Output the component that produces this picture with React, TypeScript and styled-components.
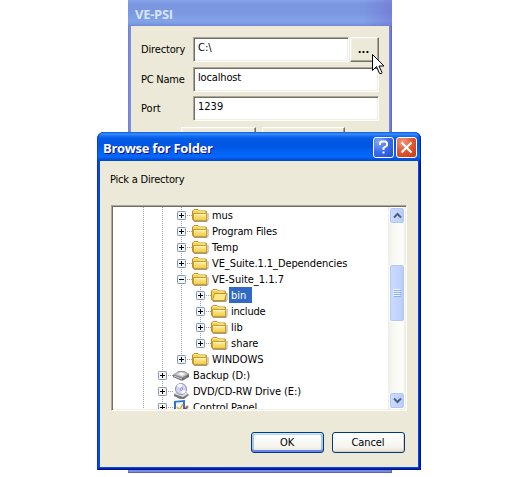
import React from "react";
import styled, { createGlobalStyle, css } from "styled-components";

const Global = createGlobalStyle`
  html, body { margin: 0; background: #fff; }
  body { font: 11px/16px "DejaVu Sans Condensed", "DejaVu Sans", sans-serif; color: #000; overflow: hidden; }
  * { box-sizing: border-box; }
`;

const Desktop = styled.main`
  position: relative;
  width: 531px;
  height: 477px;
  overflow: hidden;
  background: #fff;
`;

const Text = styled.span<{ $ls?: number }>`
  white-space: pre;
  letter-spacing: ${(p) => p.$ls ?? 0}px;
`;

const BackWindow = styled.section`
  position: absolute;
  left: 128px;
  top: 0;
  width: 264px;
  height: 473px;
  padding: 0 3px 4px;
  background: linear-gradient(90deg, #6673d0 0, #7b8ce3 1px, #7888df 262px, #5c5fb8 264px);
  border-bottom: 1px solid #5b62bd;
`;

const BackTitle = styled.header`
  height: 26px;
  margin: 0 -3px;
  padding: 5px 0 0 7px;
  font: bold 13px/18px "Open Sans", "DejaVu Sans Condensed", sans-serif;
  color: #d8e4f8;
  background: linear-gradient(90deg, transparent 235px, rgba(112, 100, 205, 0.45)),
    linear-gradient(#86a6e8 0, #7a96df 4px, #7b97e0 13px, #82a4e8 21px, #7b99e2 24px, #7387d8 26px);
`;

const BackBody = styled.div`
  height: 443px;
  padding: 11px 10px 0;
  background: #ece9d8;
`;

const Field = styled.div<{ $gap: number }>`
  display: grid;
  grid-template-columns: 52px 1fr auto;
  height: 23px;
  margin-bottom: ${(p) => p.$gap}px;
  line-height: 25px;
`;

const sunken = css`
  background: #fff;
  border: 1px solid;
  border-color: #aca899 #fff #fff #aca899;
  box-shadow: inset 1px 1px #716f64, inset -1px -1px #f1efe2;
`;

const raised = css`
  background: #ece9d8;
  border: 1px solid;
  border-color: #fff #716f64 #716f64 #fff;
  box-shadow: inset -1px -1px #aca899, inset 1px 1px #f1efe2;
`;

const Input = styled.div`
  ${sunken}
  padding-left: 4px;
  line-height: 19px;
`;

const Browse = styled.button`
  ${raised}
  width: 29px;
  margin-left: 1px;
  padding: 0 2px 0 0;
  font: inherit;
  font-weight: bold;
  line-height: 18px;
`;

const HiddenActions = styled.div`
  display: flex;
  gap: 6px;
  margin: 8px 0 0 40px;
`;

const ClassicButton = styled.div<{ $w: number }>`
  ${raised}
  width: ${(p) => p.$w}px;
  height: 23px;
`;

const Dialog = styled.section`
  position: absolute;
  left: 97px;
  top: 132px;
  width: 324px;
  height: 338px;
  padding: 0 3px 3px;
  border-radius: 7px 7px 0 0;
  background: #0848dc;
  box-shadow: inset 1px 0 #0831c8, inset -1px -1px #00138c, inset -2px -2px #0325b0;
  overflow: hidden;
`;

const DialogTitle = styled.header`
  display: flex;
  height: 29px;
  margin: 0 -3px;
  padding: 5px 4px 0 6px;
  border-radius: 7px 7px 0 0;
  background: linear-gradient(#0a5ad8 0, #3b8ffc 2px, #1370f3 4px, #0358e4 7px, #0055e3 14px, #0361f4 20px, #0668fd 25px, #0252dd 27px, #0045c8 29px);
  box-shadow: inset 1px 0 #0844cb, inset -1px 0 #0326a8;
  color: #fff;
  font: bold 13px/23px "Open Sans", "DejaVu Sans Condensed", sans-serif;
  text-shadow: 1px 1px #0f1089;
`;

const TitleText = styled(Text)`
  flex: 1;
`;

const CaptionButton = styled.button<{ $close?: boolean }>`
  width: 21px;
  height: 21px;
  margin-left: 2px;
  padding: 0;
  border: 1px solid #fff;
  border-radius: 3px;
  background: ${(p) =>
    p.$close
      ? "radial-gradient(circle at 30% 20%, #ee9a80 0, #e2562f 50%, #c63c10 100%)"
      : "radial-gradient(circle at 25% 20%, #86a9f5 0, #3c6cea 50%, #1a4bd6 100%)"};
  svg { display: block; }
`;

const DialogBody = styled.div`
  height: 306px;
  padding: 11px 11px 0;
  background: #ece9d8;
`;

const Prompt = styled.div`
  height: 33px;
  margin-left: -1px;
`;

const TreeBox = styled.div`
  ${sunken}
  display: flex;
  width: 296px;
  height: 206px;
  padding: 1px;
`;

const Tree = styled.ul`
  flex: 1;
  margin: 0;
  padding: 0;
  list-style: none;
  overflow: hidden;
`;

const Item = styled.li`
  display: flex;
  height: 16px;
  svg { flex: none; display: block; }
`;

const ItemName = styled(Text)<{ $selected?: boolean }>`
  height: 16px;
  padding: 0 6px 0 2px;
  margin-left: 1px;
  line-height: 17px;
  ${(p) => p.$selected && css`background: #316ac5; color: #fff;`}
`;

const ScrollTrack = styled.div`
  display: flex;
  flex-direction: column;
  width: 17px;
  background: linear-gradient(90deg, #eeede5 0, #f8f8f3 5px, #fefefb 15px, #eeede5 17px);
`;

const ScrollPart = styled.div<{ $h: number }>`
  display: flex;
  align-items: center;
  justify-content: center;
  height: ${(p) => p.$h}px;
  margin: 0 0 0 1px;
  border: 1px solid #fff;
  border-radius: 3px;
  background: linear-gradient(90deg, #cbdafe, #c1d3fd 70%, #b4c8f6);
  box-shadow: inset 0 0 0 1px #b5c8f3, inset 0 -1px #9db4e0;
`;

const Gap = styled.div<{ $h: number }>`
  height: ${(p) => p.$h}px;
`;

const Actions = styled.footer`
  display: flex;
  justify-content: flex-end;
  gap: 8px;
  padding: 21px 2px 0 0;
`;

const XpButton = styled.button<{ $default?: boolean }>`
  width: 73px;
  height: 21px;
  padding: 0 1px 0 0;
  border: 1px solid #003c74;
  border-radius: 3px;
  color: #000;
  font: inherit;
  line-height: 20px;
  letter-spacing: -0.1px;
  background: linear-gradient(#fff, #f5f4ee 75%, #e4e0d3);
  box-shadow: ${(p) =>
    p.$default
      ? "inset 0 1px #cee7ff, inset 0 -2px #6982ee, inset 2px 0 #a9c5f1, inset -2px 0 #a9c5f1, inset 0 2px #bcd4f6"
      : "inset -1px -1px #d6d0c5"};
`;

const Cursor = styled.svg`
  position: absolute;
  left: 372px;
  top: 54px;
`;

type Kind = "folder" | "open" | "drive" | "disc" | "panel";
type Node = { name: string; level: number; kind: Kind; expanded?: boolean; last?: boolean; ls?: number };

const nodes: Node[] = [
  { name: "mus", level: 1, kind: "folder", ls: -0.1 },
  { name: "Program Files", level: 1, kind: "folder", ls: -0.12 },
  { name: "Temp", level: 1, kind: "folder" },
  { name: "VE_Suite.1.1_Dependencies", level: 1, kind: "folder", ls: -0.09 },
  { name: "VE-Suite_1.1.7", level: 1, kind: "folder", expanded: true },
  { name: "bin", level: 2, kind: "open" },
  { name: "include", level: 2, kind: "folder", ls: -0.2 },
  { name: "lib", level: 2, kind: "folder" },
  { name: "share", level: 2, kind: "folder", last: true },
  { name: "WINDOWS", level: 1, kind: "folder", last: true },
  { name: "Backup (D:)", level: 0, kind: "drive", ls: -0.1 },
  { name: "DVD/CD-RW Drive (E:)", level: 0, kind: "disc", ls: -0.07 },
  { name: "Control Panel", level: 0, kind: "panel", ls: -0.1 },
];

const GUIDE = "#a5a294";

function Icon({ kind }: { kind: Kind }) {
  if (kind === "drive")
    return (
      <g>
        <path d="M0 8l6-4h5l5 3v3l-6 3.500H8L0 10z" fill="#707074" />
        <path d="M.5 7.500L6 4.500h5l4.500 2.500L9.500 10.500z" fill="#c9c9cc" stroke="#98989b" strokeWidth=".6" />
        <path d="M5 7l3-1.500L12 7l-3 1.800z" fill="#f8f8f8" />
        <path d="M1 9l8 3" stroke="#d8d8da" />
        <path d="M11 11l2-1" stroke="#69a657" />
      </g>
    );
  if (kind === "disc")
    return (
      <g>
        <path d="M1 11l4-2h8l3 3-5 4H7l-6-3z" fill="#77777c" />
        <path d="M1 11l4-2h8l2 2-5 3z" fill="#dedee2" />
        <circle cx="8" cy="6" r="5.500" fill="#d4d5f4" stroke="#8d8eb9" />
        <path d="M8 6L4 2.500A5 5 0 019 1zM8 6l5 2a5 5 0 01-4 3z" fill="#fff" />
        <circle cx="8.500" cy="6" r="1.700" fill="#8d8dcb" />
        <circle cx="8.500" cy="6" r=".7" fill="#fff" />
      </g>
    );
  if (kind === "panel")
    return (
      <g>
        <path d="M1 2l11-1v14L1 14z" fill="#2f74c8" />
        <path d="M3 3.500l7-.5v9l-7 .5z" fill="#f0f6fd" />
        <path d="M4 8l2.500 3L10 5" fill="none" stroke="#e7ad28" strokeWidth="1.500" />
        <path d="M8 11l7-4-2 5-3 2z" fill="#2a5caa" />
        <circle cx="14" cy="8" r="1.500" fill="#d86b3c" />
      </g>
    );
  return (
    <g>
      <path d="M2 14.500h13l1-1.500V6" fill="none" stroke="#77684a" strokeOpacity=".65" />
      <path d="M.5 12.500V4L2 2.500h4L7.500 4H14l.5 1v8.500h-13z" fill="#f3cf55" stroke="#c09226" />
      {kind === "open" ? (
        <path d="M1.500 13.500l2-7h12l-2 7z" fill="#fde984" stroke="#c39325" />
      ) : (
        <>
          <path d="M1.500 6.500h13v7h-13z" fill="url(#folder)" stroke="#c79b2c" />
          <path d="M2 7.500h12" stroke="#fff8c9" />
        </>
      )}
      <path d="M2 3.500h4L7.500 5H13" fill="none" stroke="#fff3ae" />
    </g>
  );
}

function Row({ node, index }: { node: Node; index: number }) {
  const x = 45 + node.level * 19;
  const guides = Array.from({ length: node.level + 2 }, (_, i) => 30 + i * 19);
  return (
    <Item>
      <svg width={x + 32} height="16">
        {index === 0 && (
          <defs>
            <linearGradient id="folder" x1="0" y1="0" x2="0" y2="1">
              <stop offset="0" stopColor="#ffef9c" />
              <stop offset="1" stopColor="#f3c944" />
            </linearGradient>
          </defs>
        )}
        {guides.map((g, i) => (
          <path
            key={g}
            d={`M${g + 0.5} 0V${node.last && i === node.level + 1 ? 8 : 16}`}
            stroke={GUIDE}
            strokeDasharray="1 1"
          />
        ))}
        <path d={`M${x + 10} 8.500H${x + 16}`} stroke={GUIDE} strokeDasharray="1 1" />
        <rect x={x + 0.5} y="4.500" width="8" height="8" rx=".8" fill="#f5f4ef" stroke="#7898b5" />
        <path d={`M${x + 2} 8.500h5${node.expanded ? "" : `M${x + 4.5} 6v5`}`} stroke="#000" />
        <g transform={`translate(${x + 15} 0)`}>
          <Icon kind={node.kind} />
        </g>
      </svg>
      <ItemName $ls={node.ls} $selected={node.name === "bin"}>{node.name}</ItemName>
    </Item>
  );
}

export default function App() {
  return (
    <Desktop>
      <Global />
      <BackWindow>
        <BackTitle><Text $ls={-0.3}>VE-PSI</Text></BackTitle>
        <BackBody>
          <Field $gap={7}>
            <Text $ls={-0.15}>Directory</Text>
            <Input>C:\</Input>
            <Browse>...</Browse>
          </Field>
          <Field $gap={6}>
            <Text $ls={-0.25}>PC Name</Text>
            <Input><Text $ls={-0.15}>localhost</Text></Input>
          </Field>
          <Field $gap={0}>
            <Text>Port</Text>
            <Input><Text>1239</Text></Input>
          </Field>
          <HiddenActions>
            <ClassicButton $w={75} />
            <ClassicButton $w={83} />
          </HiddenActions>
        </BackBody>
      </BackWindow>
      <Cursor width="13" height="21" viewBox="0 0 13 21">
        <path d="M.5.5v16l4-4 3 7h2l.5-1-3-6.500h5z" fill="#fff" stroke="#000" />
      </Cursor>
      <Dialog>
        <DialogTitle>
          <TitleText $ls={-0.3}>Browse for Folder</TitleText>
          <CaptionButton aria-label="Help">
            <svg width="19" height="19"><path d="M6 7V5l1.500-1.500h4L13 5v2.500L9.500 10v2M9.500 13.500v2" fill="none" stroke="#fff" strokeWidth="2" /></svg>
          </CaptionButton>
          <CaptionButton $close aria-label="Close">
            <svg width="19" height="19"><path d="M4.500 4.500l10 10M14.500 4.500l-10 10" stroke="#fff" strokeWidth="2.200" /></svg>
          </CaptionButton>
        </DialogTitle>
        <DialogBody>
          <Prompt><Text $ls={-0.2}>Pick a Directory</Text></Prompt>
          <TreeBox>
            <Tree>{nodes.map((n, i) => <Row key={n.name} node={n} index={i} />)}</Tree>
            <ScrollTrack>
              <ScrollPart $h={17}><svg width="9" height="7"><path d="M1 5.500l3.500-3.500L8 5.500" fill="none" stroke="#4d6185" strokeWidth="2" /></svg></ScrollPart>
              <Gap $h={40} />
              <ScrollPart $h={58}>
                <svg width="8" height="8"><path d="M0 .5h7M0 2.500h7M0 4.500h7M0 6.500h7" stroke="#eef4fe" /><path d="M1 1.500h7M1 3.500h7M1 5.500h7M1 7.500h7" stroke="#8cb0f8" /></svg>
              </ScrollPart>
              <Gap $h={70} />
              <ScrollPart $h={17}><svg width="9" height="7"><path d="M1 1.500L4.500 5 8 1.500" fill="none" stroke="#4d6185" strokeWidth="2" /></svg></ScrollPart>
            </ScrollTrack>
          </TreeBox>
          <Actions>
            <XpButton $default>OK</XpButton>
            <XpButton>Cancel</XpButton>
          </Actions>
        </DialogBody>
      </Dialog>
    </Desktop>
  );
}
